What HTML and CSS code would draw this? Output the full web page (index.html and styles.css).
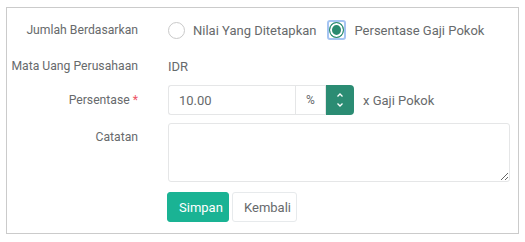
FILE: index.html
```html
<!DOCTYPE html>
<html lang="id">
<head>
    <meta charset="UTF-8">
    <meta name="viewport" content="width=device-width, initial-scale=1.0">
    <title>Tunjangan</title>
    <link rel="stylesheet" href="styles.css">
</head>
<body>
    <div class="panel">
        <div class="form-row row-radio">
            <label class="label">Jumlah Berdasarkan</label>
            <div class="control radios">
                <span class="radio-item"><span class="radio"></span>Nilai Yang Ditetapkan</span>
                <span class="radio-item"><span class="radio-focus"><span class="radio checked"></span></span>Persentase Gaji Pokok</span>
            </div>
        </div>
        <div class="form-row row-currency">
            <label class="label">Mata Uang Perusahaan</label>
            <div class="control">IDR</div>
        </div>
        <div class="form-row row-percent">
            <label class="label">Persentase <span class="req">*</span></label>
            <div class="control input-line">
                <div class="input-group">
                    <input class="input" type="text" value="10.00">
                    <span class="addon">%</span>
                    <button class="spin">
                        <svg width="8" height="16" viewBox="0 0 8 16">
                            <path d="M1.5 4.5 L4 2 L6.5 4.5" fill="none" stroke="#fff" stroke-width="1.3"/>
                            <path d="M1.5 11.5 L4 14 L6.5 11.5" fill="none" stroke="#fff" stroke-width="1.3"/>
                        </svg>
                    </button>
                </div>
                <span class="suffix">x Gaji Pokok</span>
            </div>
        </div>
        <div class="form-row row-note">
            <label class="label">Catatan</label>
            <div class="control">
                <textarea class="textarea"></textarea>
            </div>
        </div>
        <div class="form-row row-actions">
            <span></span>
            <div class="control buttons">
                <button class="btn btn-primary">Simpan</button>
                <button class="btn btn-white">Kembali</button>
            </div>
        </div>
    </div>
</body>
</html>
```

FILE: styles.css
```css
body {
    margin: 0;
    font-family: Roboto, "Liberation Sans", sans-serif;
    font-size: 13px;
    color: #676a6c;
    background-color: #fff;
}
.panel {
    margin: 7px 6px 0 6px;
    border: 1px solid #cbcbcb;
    padding: 7px 8px 10px 0;
    height: 208px;
}
.form-row {
    display: grid;
    grid-template-columns: 131px 1fr;
    column-gap: 30px;
    align-items: center;
    min-height: 30px;
}
.row-currency {
    margin-top: 6px;
}
.row-percent {
    margin-top: 4px;
}
.row-note {
    margin-top: 8px;
    align-items: start;
}
.row-note .label {
    padding-top: 6px;
}
.row-actions {
    margin-top: 10px;
}
.label {
    text-align: right;
    line-height: 16px;
    font-size: 12.2px;
    white-space: nowrap;
}
.req {
    color: #ed5565;
}
.radios {
    display: flex;
    align-items: center;
    gap: 11px;
}
.radio-item {
    display: flex;
    align-items: center;
    gap: 8px;
}
.radio {
    display: inline-block;
    box-sizing: border-box;
    width: 17px;
    height: 17px;
    border: 1px solid #c9c9c9;
    border-radius: 50%;
    background: #fff;
}
.radio.checked {
    width: 16px;
    height: 16px;
    border: 1.5px solid #2a8a70;
    background: #2a8a70;
    box-shadow: inset 0 0 0 2px #fff;
}
.radio-focus {
    display: flex;
    align-items: center;
    justify-content: center;
    box-sizing: border-box;
    width: 19px;
    height: 20px;
    border: 2px solid #a5c4f2;
    border-radius: 3px;
}
.input-line {
    display: flex;
    align-items: center;
    gap: 9px;
}
.input-group {
    display: flex;
    height: 30px;
}
.input {
    box-sizing: border-box;
    width: 127px;
    height: 30px;
    border: 1px solid #e5e6e7;
    border-right: none;
    border-radius: 3px 0 0 3px;
    padding: 0 10px;
    font-family: inherit;
    font-size: 13px;
    color: #676a6c;
    outline: none;
}
.addon {
    box-sizing: border-box;
    width: 31px;
    border: 1px solid #e5e6e7;
    display: flex;
    align-items: center;
    justify-content: center;
    font-size: 12px;
}
.spin {
    width: 28px;
    border: none;
    border-radius: 0 4px 4px 0;
    background: #2b8c73;
    display: flex;
    align-items: center;
    justify-content: center;
    padding: 0;
}
.textarea {
    display: block;
    box-sizing: border-box;
    width: 342px;
    height: 59px;
    border: 1px solid #e5e6e7;
    border-radius: 3px;
    margin: 0;
    font-family: inherit;
}
.buttons {
    display: flex;
    gap: 3px;
    margin-left: -1px;
}
.btn {
    height: 30px;
    border-radius: 3px;
    font-family: inherit;
    font-size: 13px;
    padding: 0 11px;
    cursor: pointer;
}
.btn-primary {
    width: 62px;
    background: #1ab394;
    border: 1px solid #1ab394;
    color: #fff;
}
.btn-white {
    width: 65px;
    background: #fff;
    border: 1px solid #e7eaec;
    color: #676a6c;
}
```
